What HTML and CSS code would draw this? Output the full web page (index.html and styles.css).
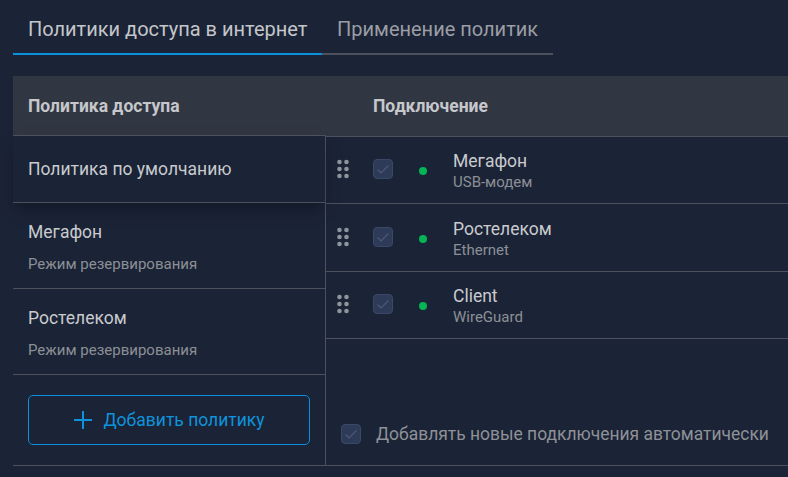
FILE: index.html
```html
<!DOCTYPE html>
<html lang="ru">
<head>
<meta charset="utf-8">
<title>Политики доступа</title>
<link rel="stylesheet" href="styles.css">
</head>
<body>
<main class="page">
  <nav class="tabs">
    <div class="tab tab-active">Политики доступа в интернет</div>
    <div class="tab">Применение политик</div>
  </nav>
  <div class="table">
    <div class="head">
      <div class="head-left">Политика доступа</div>
      <div class="head-right">Подключение</div>
    </div>
    <div class="body">
      <div class="left">
        <div class="policy policy-selected">Политика по умолчанию</div>
        <div class="policy">
          <div class="policy-name">Мегафон</div>
          <div class="policy-sub">Режим резервирования</div>
        </div>
        <div class="policy">
          <div class="policy-name">Ростелеком</div>
          <div class="policy-sub">Режим резервирования</div>
        </div>
        <div class="add-wrap">
          <button class="add-btn">
            <svg class="plus" width="20" height="20" viewBox="0 0 20 20"><path d="M10 1v18M1 10h18" stroke="#0e93dd" stroke-width="2" fill="none"/></svg>
            <span>Добавить политику</span>
          </button>
        </div>
      </div>
      <div class="right">
        <div class="conn">
          <svg class="grip" width="12" height="20" viewBox="0 0 12 20"><g fill="#8c949c"><circle cx="2.5" cy="3" r="2.3"/><circle cx="9.5" cy="3" r="2.3"/><circle cx="2.5" cy="10" r="2.3"/><circle cx="9.5" cy="10" r="2.3"/><circle cx="2.5" cy="17" r="2.3"/><circle cx="9.5" cy="17" r="2.3"/></g></svg>
          <span class="check"><svg width="20" height="20" viewBox="0 0 20 20"><path d="M4.5 10.5l3.5 3.5L15.5 6.5" stroke="#4c5a76" stroke-width="1.2" fill="none"/></svg></span>
          <span class="dot"></span>
          <div class="conn-text"><div class="conn-name">Мегафон</div><div class="conn-sub">USB-модем</div></div>
        </div>
        <div class="conn">
          <svg class="grip" width="12" height="20" viewBox="0 0 12 20"><g fill="#8c949c"><circle cx="2.5" cy="3" r="2.3"/><circle cx="9.5" cy="3" r="2.3"/><circle cx="2.5" cy="10" r="2.3"/><circle cx="9.5" cy="10" r="2.3"/><circle cx="2.5" cy="17" r="2.3"/><circle cx="9.5" cy="17" r="2.3"/></g></svg>
          <span class="check"><svg width="20" height="20" viewBox="0 0 20 20"><path d="M4.5 10.5l3.5 3.5L15.5 6.5" stroke="#4c5a76" stroke-width="1.2" fill="none"/></svg></span>
          <span class="dot"></span>
          <div class="conn-text"><div class="conn-name">Ростелеком</div><div class="conn-sub">Ethernet</div></div>
        </div>
        <div class="conn">
          <svg class="grip" width="12" height="20" viewBox="0 0 12 20"><g fill="#8c949c"><circle cx="2.5" cy="3" r="2.3"/><circle cx="9.5" cy="3" r="2.3"/><circle cx="2.5" cy="10" r="2.3"/><circle cx="9.5" cy="10" r="2.3"/><circle cx="2.5" cy="17" r="2.3"/><circle cx="9.5" cy="17" r="2.3"/></g></svg>
          <span class="check"><svg width="20" height="20" viewBox="0 0 20 20"><path d="M4.5 10.5l3.5 3.5L15.5 6.5" stroke="#4c5a76" stroke-width="1.2" fill="none"/></svg></span>
          <span class="dot"></span>
          <div class="conn-text"><div class="conn-name">Client</div><div class="conn-sub">WireGuard</div></div>
        </div>
        <div class="auto">
          <span class="check"><svg width="20" height="20" viewBox="0 0 20 20"><path d="M4.5 10.5l3.5 3.5L15.5 6.5" stroke="#4c5a76" stroke-width="1.2" fill="none"/></svg></span>
          <span class="auto-label">Добавлять новые подключения автоматически</span>
        </div>
      </div>
    </div>
  </div>
</main>
</body>
</html>
```

FILE: styles.css
```css
* { box-sizing: border-box; }
html, body { margin: 0; height: 100%; }
body {
  background: #1b2336;
  font-family: Roboto, "Noto Sans", sans-serif;
  color: #c9cbce;
  overflow: hidden;
}
.page { padding: 0 0 0 13px; width: 788px; height: 477px; }
.tabs { display: flex; padding-top: 10px; height: 55px; width: 540px; }
.tab {
  height: 45px;
  padding: 7px 15px 0;
  font-size: 20px;
  line-height: 24px;
  white-space: nowrap;
  color: #9a9ea4;
  border-bottom: 2px solid #4d515e;
  flex: 1 1 0;
  min-width: 0;
}
.tab-active { color: #c4c6ca; border-bottom-color: #0c8fdc; flex: 0 0 309px; }
.table { margin-top: 21px; }
.head { display: flex; height: 60px; background: #313643; font-weight: 700; font-size: 17.5px; line-height: 60px; color: #c5c7cb; }
.head-left { width: 313px; padding-left: 15px; }
.head-right { padding-left: 47px; }
.body { display: flex; height: 330px; border-bottom: 1px solid #4d515e; }
.left { width: 313px; border-right: 1px solid #4d515e; margin-top: -1px; display: flex; flex-direction: column; }
.policy { height: 86px; padding: 17px 15px 0; border-bottom: 1px solid #4d515e; }
.policy-selected {
  height: 68px;
  border-top: 1px solid #4d515e;
  padding-top: 21px;
  font-size: 17.5px;
  line-height: 24px;
  position: relative;
  box-shadow: 0 8px 14px -4px rgba(8, 12, 22, 0.55);
  background: #1b2336;
}
.policy-name { font-size: 17.5px; line-height: 24px; }
.policy-sub { font-size: 15px; line-height: 20px; margin-top: 10px; color: #8c9096; }
.add-wrap { padding: 20px 15px 0; flex: 1; }
.add-btn {
  width: 282px;
  height: 50px;
  background: transparent;
  border: 1px solid #0c8fdc;
  border-radius: 5px;
  color: #0e93dd;
  font: 400 17.5px Roboto, sans-serif;
  display: flex;
  align-items: center;
  justify-content: center;
  gap: 10px;
  padding: 0;
}
.plus { flex: none; }
.right { flex: 1; display: flex; flex-direction: column; }
.conn {
  height: 67.4px;
  display: flex;
  align-items: center;
  border-top: 1px solid #4d515e;
  padding-left: 11px;
  flex: none;
}
.conn:nth-child(3) { border-bottom: 1px solid #4d515e; height: 68px; }
.grip { flex: none; margin-bottom: 2px; }
.check {
  flex: none;
  width: 20px;
  height: 20px;
  border-radius: 4px;
  background: #2d3a58;
  border: 1px solid #3a4766;
  display: flex;
  align-items: center;
  justify-content: center;
}
.check svg { flex: none; }
.conn .check { margin-left: 24px; margin-bottom: 2px; }
.dot { width: 8px; height: 8px; border-radius: 50%; background: #05b454; margin: 2px 0 0 26px; flex: none; }
.conn-text { margin-left: 26px; padding-top: 2px; }
.conn-name { font-size: 17.5px; line-height: 22px; color: #c9cbce; }
.conn-sub { font-size: 15px; line-height: 20px; color: #8c9096; }
.auto { margin-top: auto; display: flex; align-items: center; height: 54px; padding: 0 0 8px 15px; }
.auto-label { margin-left: 15px; font-size: 17.45px; color: #8e9297; white-space: nowrap; }
```
